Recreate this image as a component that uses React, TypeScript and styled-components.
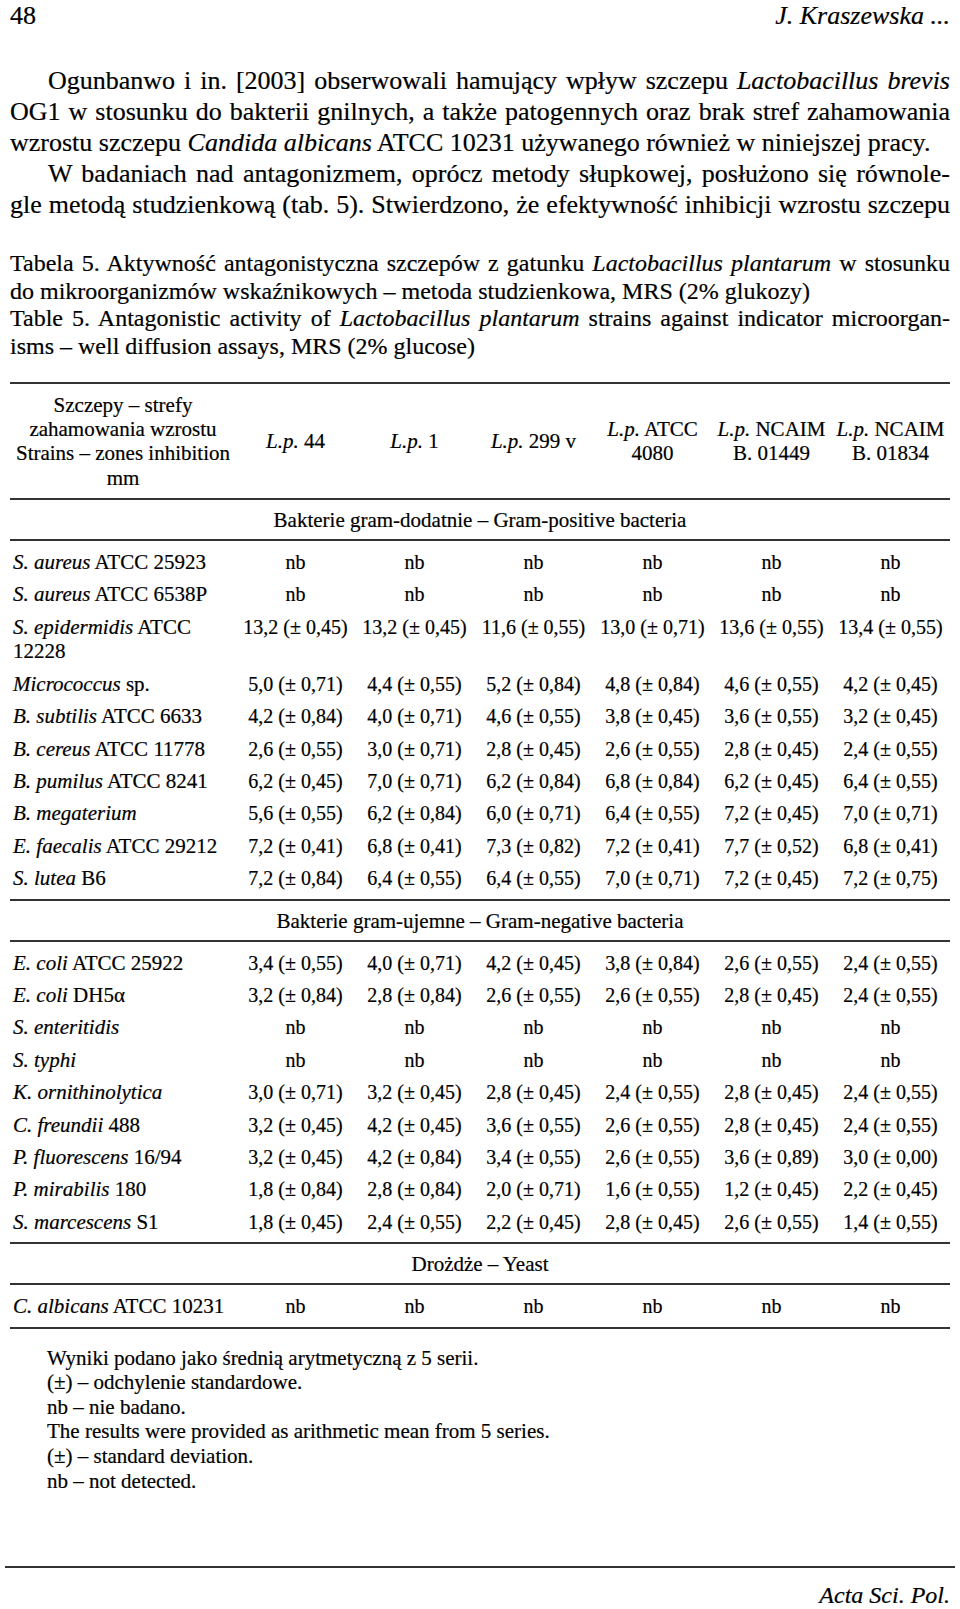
import styled, { createGlobalStyle } from 'styled-components';

type Strain = {
  genus: string;
  rest?: string;
  wrap?: string;
  values: string[];
};

const NB = ['nb', 'nb', 'nb', 'nb', 'nb', 'nb'];

const positive: Strain[] = [
  { genus: 'S. aureus', rest: 'ATCC 25923', values: NB },
  { genus: 'S. aureus', rest: 'ATCC 6538P', values: NB },
  {
    genus: 'S. epidermidis',
    rest: 'ATCC',
    wrap: '12228',
    values: ['13,2 (± 0,45)', '13,2 (± 0,45)', '11,6 (± 0,55)', '13,0 (± 0,71)', '13,6 (± 0,55)', '13,4 (± 0,55)'],
  },
  {
    genus: 'Micrococcus',
    rest: 'sp.',
    values: ['5,0 (± 0,71)', '4,4 (± 0,55)', '5,2 (± 0,84)', '4,8 (± 0,84)', '4,6 (± 0,55)', '4,2 (± 0,45)'],
  },
  {
    genus: 'B. subtilis',
    rest: 'ATCC 6633',
    values: ['4,2 (± 0,84)', '4,0 (± 0,71)', '4,6 (± 0,55)', '3,8 (± 0,45)', '3,6 (± 0,55)', '3,2 (± 0,45)'],
  },
  {
    genus: 'B. cereus',
    rest: 'ATCC 11778',
    values: ['2,6 (± 0,55)', '3,0 (± 0,71)', '2,8 (± 0,45)', '2,6 (± 0,55)', '2,8 (± 0,45)', '2,4 (± 0,55)'],
  },
  {
    genus: 'B. pumilus',
    rest: 'ATCC 8241',
    values: ['6,2 (± 0,45)', '7,0 (± 0,71)', '6,2 (± 0,84)', '6,8 (± 0,84)', '6,2 (± 0,45)', '6,4 (± 0,55)'],
  },
  {
    genus: 'B. megaterium',
    values: ['5,6 (± 0,55)', '6,2 (± 0,84)', '6,0 (± 0,71)', '6,4 (± 0,55)', '7,2 (± 0,45)', '7,0 (± 0,71)'],
  },
  {
    genus: 'E. faecalis',
    rest: 'ATCC 29212',
    values: ['7,2 (± 0,41)', '6,8 (± 0,41)', '7,3 (± 0,82)', '7,2 (± 0,41)', '7,7 (± 0,52)', '6,8 (± 0,41)'],
  },
  {
    genus: 'S. lutea',
    rest: 'B6',
    values: ['7,2 (± 0,84)', '6,4 (± 0,55)', '6,4 (± 0,55)', '7,0 (± 0,71)', '7,2 (± 0,45)', '7,2 (± 0,75)'],
  },
];

const negative: Strain[] = [
  {
    genus: 'E. coli',
    rest: 'ATCC 25922',
    values: ['3,4 (± 0,55)', '4,0 (± 0,71)', '4,2 (± 0,45)', '3,8 (± 0,84)', '2,6 (± 0,55)', '2,4 (± 0,55)'],
  },
  {
    genus: 'E. coli',
    rest: 'DH5α',
    values: ['3,2 (± 0,84)', '2,8 (± 0,84)', '2,6 (± 0,55)', '2,6 (± 0,55)', '2,8 (± 0,45)', '2,4 (± 0,55)'],
  },
  { genus: 'S. enteritidis', values: NB },
  { genus: 'S. typhi', values: NB },
  {
    genus: 'K. ornithinolytica',
    values: ['3,0 (± 0,71)', '3,2 (± 0,45)', '2,8 (± 0,45)', '2,4 (± 0,55)', '2,8 (± 0,45)', '2,4 (± 0,55)'],
  },
  {
    genus: 'C. freundii',
    rest: '488',
    values: ['3,2 (± 0,45)', '4,2 (± 0,45)', '3,6 (± 0,55)', '2,6 (± 0,55)', '2,8 (± 0,45)', '2,4 (± 0,55)'],
  },
  {
    genus: 'P. fluorescens',
    rest: '16/94',
    values: ['3,2 (± 0,45)', '4,2 (± 0,84)', '3,4 (± 0,55)', '2,6 (± 0,55)', '3,6 (± 0,89)', '3,0 (± 0,00)'],
  },
  {
    genus: 'P. mirabilis',
    rest: '180',
    values: ['1,8 (± 0,84)', '2,8 (± 0,84)', '2,0 (± 0,71)', '1,6 (± 0,55)', '1,2 (± 0,45)', '2,2 (± 0,45)'],
  },
  {
    genus: 'S. marcescens',
    rest: 'S1',
    values: ['1,8 (± 0,45)', '2,4 (± 0,55)', '2,2 (± 0,45)', '2,8 (± 0,45)', '2,6 (± 0,55)', '1,4 (± 0,55)'],
  },
];

const yeast: Strain[] = [{ genus: 'C. albicans', rest: 'ATCC 10231', values: NB }];

const StrainRows = ({ rows }: { rows: Strain[] }) => (
  <>
    {rows.map((s, i) => (
      <tr key={i}>
        <LabelCell>
          <i>{s.genus}</i>
          {s.rest ? ` ${s.rest}` : ''}
          {s.wrap && (
            <>
              <br />
              {s.wrap}
            </>
          )}
        </LabelCell>
        {s.values.map((v, j) => (
          <ValueCell key={j}>{v}</ValueCell>
        ))}
      </tr>
    ))}
  </>
);

const App = () => {
  return (
    <Page>
      <GlobalStyle />
      <Header>
        <span>48</span>
        <i>J. Kraszewska ...</i>
      </Header>

      <Body>
        <Line $justify $indent>
          Ogunbanwo i in. [2003] obserwowali hamujący wpływ szczepu <i>Lactobacillus brevis</i>
        </Line>
        <Line $justify>
          OG1 w stosunku do bakterii gnilnych, a także patogennych oraz brak stref zahamowania
        </Line>
        <Line>
          wzrostu szczepu <i>Candida albicans</i> ATCC 10231 używanego również w niniejszej pracy.
        </Line>
        <Line $justify $indent>
          W badaniach nad antagonizmem, oprócz metody słupkowej, posłużono się równole-
        </Line>
        <Line $justify>
          gle metodą studzienkową (tab. 5). Stwierdzono, że efektywność inhibicji wzrostu szczepu
        </Line>
      </Body>

      <Caption>
        <Line $justify>
          Tabela 5. Aktywność antagonistyczna szczepów z gatunku <i>Lactobacillus plantarum</i> w stosunku
        </Line>
        <Line>do mikroorganizmów wskaźnikowych – metoda studzienkowa, MRS (2% glukozy)</Line>
        <Line $justify>
          Table 5. Antagonistic activity of <i>Lactobacillus plantarum</i> strains against indicator microorgan-
        </Line>
        <Line>isms – well diffusion assays, MRS (2% glucose)</Line>
      </Caption>

      <Table>
        <colgroup>
          <col style={{ width: 226 }} />
          <col />
          <col />
          <col />
          <col />
          <col />
          <col />
        </colgroup>
        <thead>
          <tr>
            <HeadCell>
              Szczepy – strefy
              <br />
              zahamowania wzrostu
              <br />
              Strains – zones inhibition
              <br />
              mm
            </HeadCell>
            <HeadCell>
              <i>L.p.</i> 44
            </HeadCell>
            <HeadCell>
              <i>L.p.</i> 1
            </HeadCell>
            <HeadCell>
              <i>L.p.</i> 299 v
            </HeadCell>
            <HeadCell>
              <i>L.p.</i> ATCC
              <br />
              4080
            </HeadCell>
            <HeadCell>
              <i>L.p.</i> NCAIM
              <br />
              B. 01449
            </HeadCell>
            <HeadCell>
              <i>L.p.</i> NCAIM
              <br />
              B. 01834
            </HeadCell>
          </tr>
        </thead>

        <tbody>
          <tr>
            <SectionCell colSpan={7}>Bakterie gram-dodatnie – Gram-positive bacteria</SectionCell>
          </tr>
        </tbody>
        <DataBody>
          <StrainRows rows={positive} />
        </DataBody>

        <tbody>
          <tr>
            <SectionCell colSpan={7}>Bakterie gram-ujemne – Gram-negative bacteria</SectionCell>
          </tr>
        </tbody>
        <DataBody>
          <StrainRows rows={negative} />
        </DataBody>

        <tbody>
          <tr>
            <SectionCell colSpan={7}>Drożdże – Yeast</SectionCell>
          </tr>
        </tbody>
        <DataBody $closing>
          <StrainRows rows={yeast} />
        </DataBody>
      </Table>

      <Notes>
        <div>Wyniki podano jako średnią arytmetyczną z 5 serii.</div>
        <div>(±) – odchylenie standardowe.</div>
        <div>nb – nie badano.</div>
        <div>The results were provided as arithmetic mean from 5 series.</div>
        <div>(±) – standard deviation.</div>
        <div>nb – not detected.</div>
      </Notes>

      <FooterRule />
      <Journal>Acta Sci. Pol.</Journal>
    </Page>
  );
};

export default App;

const GlobalStyle = createGlobalStyle`
  html, body {
    margin: 0;
    padding: 0;
    background: #fff;
  }
  body {
    font-family: 'Liberation Serif', 'Times New Roman', serif;
    color: #000;
    -webkit-text-stroke: 0.2px #000;
  }
`;

const Page = styled.div`
  width: 960px;
  min-height: 1609px;
  box-sizing: border-box;
  padding: 2px 10px 0;
`;

const Header = styled.div`
  display: flex;
  justify-content: space-between;
  align-items: baseline;
  font-size: 26px;
  line-height: 28px;
`;

const Body = styled.div`
  margin-top: 35px;
  font-size: 26px;
  line-height: 31px;
`;

const Line = styled.div<{ $justify?: boolean; $indent?: boolean }>`
  text-align: ${(p) => (p.$justify ? 'justify' : 'left')};
  text-align-last: ${(p) => (p.$justify ? 'justify' : 'auto')};
  text-indent: ${(p) => (p.$indent ? '38px' : '0')};
`;

const Caption = styled.div`
  margin-top: 30px;
  font-size: 24px;
  line-height: 27.6px;
`;

const Table = styled.table`
  margin-top: 21.5px;
  width: 100%;
  border-collapse: collapse;
  table-layout: fixed;
  font-size: 21px;
  line-height: 24.3px;
`;

const HeadCell = styled.th`
  font-weight: normal;
  text-align: center;
  vertical-align: middle;
  padding: 9px 0 8px;
  border-top: 2px solid #333;
  border-bottom: 2px solid #333;
  white-space: nowrap;
`;

const SectionCell = styled.td`
  text-align: center;
  padding: 8px 0 7px;
  line-height: 24px;
  border-top: 2px solid #333;
  border-bottom: 2px solid #333;
`;

const DataBody = styled.tbody<{ $closing?: boolean }>`
  td {
    padding-top: 4px;
    padding-bottom: 4px;
    line-height: 24.4px;
    vertical-align: baseline;
  }
  tr:first-child td {
    padding-top: 9px;
  }
  tr:last-child td {
    padding-bottom: 8px;
    border-bottom: ${(p) => (p.$closing ? '2px solid #333' : 'none')};
  }
`;

const LabelCell = styled.td`
  text-align: left;
  padding-left: 3px;
  white-space: nowrap;
`;

const ValueCell = styled.td`
  text-align: center;
  font-size: 20px;
  white-space: nowrap;
`;

const Notes = styled.div`
  margin-top: 17px;
  padding-left: 37px;
  font-size: 21px;
  line-height: 24.6px;
`;

const FooterRule = styled.div`
  margin: 73px -5px 0;
  border-top: 2px solid #333;
`;

const Journal = styled.div`
  margin-top: 18px;
  text-align: right;
  font-style: italic;
  font-size: 24px;
  line-height: 18px;
`;
